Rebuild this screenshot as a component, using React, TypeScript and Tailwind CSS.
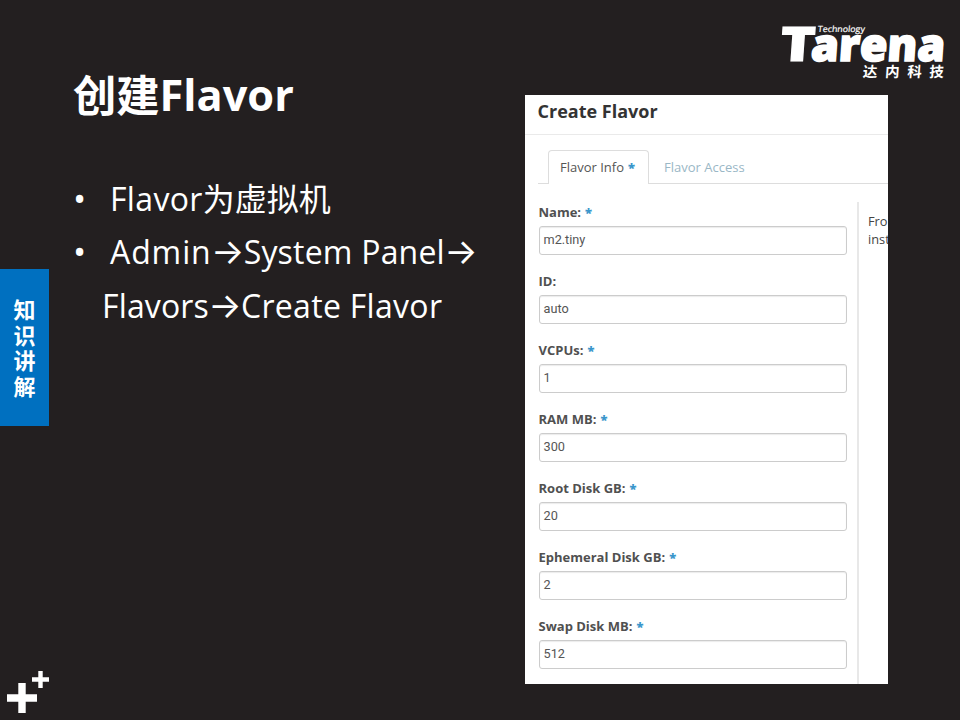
const FIELDS = [
  { label: 'Name:', value: 'm2.tiny', required: true },
  { label: 'ID:', value: 'auto', required: false },
  { label: 'VCPUs:', value: '1', required: true },
  { label: 'RAM MB:', value: '300', required: true },
  { label: 'Root Disk GB:', value: '20', required: true },
  { label: 'Ephemeral Disk GB:', value: '2', required: true },
  { label: 'Swap Disk MB:', value: '512', required: true },
];

const Star = () => <span className="ml-1 font-extrabold text-[#3a96cb]">*</span>;

const Arrow = () => (
  <span className="inline-block h-[30px] w-[32px] text-center align-baseline font-['Inter',sans-serif] text-[35px] leading-[30px] tracking-normal">
    <span className="-mx-2">→</span>
  </span>
);

const Bullet = () => <span className="-ml-px w-[37px] text-[35px]">•</span>;

function Sidebar() {
  return (
    <aside className="flex h-full w-[49px] shrink-0 flex-col justify-between pt-[269px] pb-[7px]">
      <div className="flex h-[157px] flex-col items-center justify-center bg-[#0070c0] pb-px font-['Noto_Sans_CJK_SC',sans-serif] text-[22px] leading-[25.5px] font-bold text-white">
        <span>知</span>
        <span>识</span>
        <span>讲</span>
        <span>解</span>
      </div>
      <svg className="h-[43px] w-[49px]" viewBox="0 0 49 43" fill="none" stroke="#fff">
        <path d="M22 13v30M7 28h30" strokeWidth="7.4" />
        <path d="M40.5 1v17M32 9.5h17" strokeWidth="4.4" />
      </svg>
    </aside>
  );
}

function Logo() {
  return (
    <svg className="h-[95px] w-[435px]" viewBox="525 0 435 95" fill="#fff">
      <g transform="skewX(-4)" fontFamily="Open Sans, sans-serif" fontWeight="800" stroke="#fff">
        <text x="783.5" y="61" textLength="35" lengthAdjust="spacingAndGlyphs" fontSize="47.5" strokeWidth="1">T</text>
        <text x="814.5" y="61" textLength="134" lengthAdjust="spacingAndGlyphs" fontSize="45" strokeWidth="1.7">arena</text>
      </g>
      <text x="817.5" y="32.5" textLength="47" lengthAdjust="spacingAndGlyphs" fontFamily="Open Sans, sans-serif" fontSize="8.5" stroke="#fff" strokeWidth=".2" transform="translate(3.5 0) skewX(-6)">Technology</text>
      <text x="868" y="77.5" textLength="81" fontFamily="Noto Sans CJK SC, sans-serif" fontWeight="700" fontSize="14.5" transform="skewX(-4)">达内科技</text>
    </svg>
  );
}

function FlavorDialog() {
  return (
    <section className="flex h-[589px] w-[363px] flex-col overflow-hidden bg-white font-['Open_Sans',sans-serif] text-[13px] text-[#555]">
      <h2 className="h-[40px] shrink-0 border-b border-[#eaeaea] pl-[12.5px] text-[18px] leading-[33px] font-bold text-[#333]">Create Flavor</h2>
      <nav className="mt-[15px] ml-[13px] flex h-[34px] shrink-0 items-stretch leading-[33px] whitespace-nowrap">
        <span className="w-[10px] border-b border-[#ddd]" />
        <span className="w-[101px] rounded-t border border-b-0 border-[#ddd] pl-[11px]">Flavor Info<Star /></span>
        <span className="flex-1 border-b border-[#ddd] pt-px pl-[15px] text-[#9ab7c6]">Flavor Access</span>
      </nav>
      <div className="mt-[18px] flex flex-1">
        <form className="flex w-[334px] shrink-0 flex-col border-r-2 border-[#e8e8e8] pl-[13.5px]">
          {FIELDS.map((f) => (
            <label key={f.label} className="flex h-[69px] shrink-0 flex-col">
              <span className="h-[24px] text-[13px] leading-[21px] font-bold whitespace-nowrap text-[#505050]">{f.label}{f.required && <Star />}</span>
              <span className="h-[28.5px] w-[308.5px] rounded-[3px] border border-[#ccc] pl-1 font-['Roboto',sans-serif] text-[12.7px] leading-[26px] shadow-[inset_0_1px_1px_rgba(0,0,0,0.08)]">{f.value}</span>
            </label>
          ))}
        </form>
        <p className="ml-[9px] w-[20px] shrink-0 pt-[10px] text-[12.8px] leading-[18px] whitespace-nowrap text-[#444]">Fro<br />inst</p>
      </div>
    </section>
  );
}

export default function App() {
  return (
    <main className="flex h-[720px] w-[960px] overflow-hidden bg-[#231f20]">
      <Sidebar />
      <article className="w-[476px] shrink-0 pt-[66px] pl-[25px] font-['Open_Sans','Noto_Sans_CJK_SC',sans-serif] whitespace-nowrap text-white">
        <h1 className="-ml-px h-[106px] text-[43.3px] leading-[58px] font-bold"><span className="relative top-px">创建</span>Flavor</h1>
        <ul className="text-[32px] leading-[53.5px]">
          <li className="flex h-[53px]"><Bullet /><span><span className="tracking-[0.35px]">Flavor</span>为虚拟机</span></li>
          <li className="flex h-[54px]"><Bullet /><span><span className="tracking-[0.9px]">Admin</span><Arrow /><span className="tracking-[0.2px]">System Panel</span><Arrow /></span></li>
          <li className="pl-[28px]"><span className="tracking-[0.15px]">Flavors</span><Arrow /><span className="tracking-[0.3px]">Create Flavor</span></li>
        </ul>
      </article>
      <div className="flex w-[435px] shrink-0 flex-col">
        <Logo />
        <FlavorDialog />
      </div>
    </main>
  );
}
